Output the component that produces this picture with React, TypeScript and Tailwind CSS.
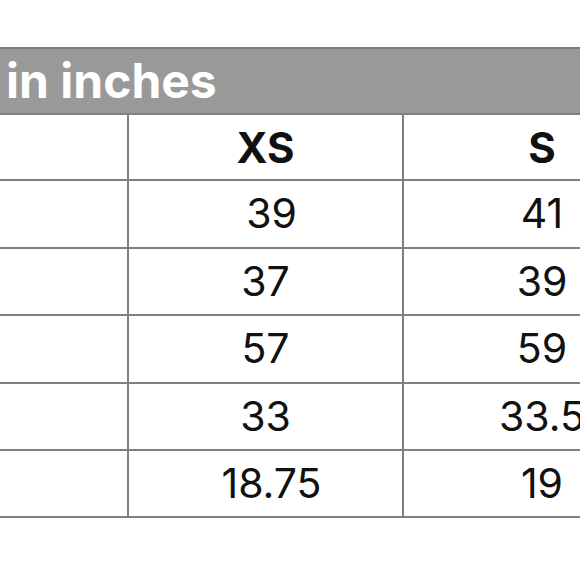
import React from 'react';

type Row = {
    xs: string;
    s: string;
    xsShift?: boolean;
};

const rows: Row[] = [
    { xs: '39', s: '41', xsShift: true },
    { xs: '37', s: '39' },
    { xs: '57', s: '59' },
    { xs: '33', s: '33.5' },
    { xs: '18.75', s: '19', xsShift: true },
];

// row heights so lines land on the picture's grid
const heights = ['h-[68px]', 'h-[67px]', 'h-[68px]', 'h-[67px]', 'h-[67px]'];

const App: React.FC = () => {
    return (
        <div className="w-[580px] h-[580px] bg-white overflow-hidden pt-[47px] font-['Inter','Liberation_Sans',sans-serif] text-[#111]">
            <div className="w-[690px] border-t-2 border-[#7c7c7c]">
                <div className="h-[64px] bg-[#999999] flex items-center pl-[6px] text-white font-bold text-[48px] leading-none">
                    in inches
                </div>
                <div className="flex h-[68px] border-y-2 border-[#808080]">
                    <div className="w-[129px] border-r-2 border-[#808080]" />
                    <div className="w-[275px] border-r-2 border-[#808080] flex items-center justify-center font-bold text-[42px]">
                        XS
                    </div>
                    <div className="w-[276px] flex items-center justify-center font-bold text-[42px]">S</div>
                </div>
                {rows.map((r, i) => (
                    <div key={i} className={`flex ${heights[i]} border-b-2 border-[#808080]`}>
                        <div className="w-[129px] border-r-2 border-[#808080]" />
                        <div
                            className={[
                                'w-[275px] border-r-2 border-[#808080] flex items-center justify-center text-[41px]',
                                r.xsShift ? 'pl-[12px]' : '',
                            ].join(' ')}
                        >
                            {r.xs}
                        </div>
                        <div className="w-[276px] flex items-center justify-center text-[41px]">{r.s}</div>
                    </div>
                ))}
            </div>
        </div>
    );
};

export default App;
